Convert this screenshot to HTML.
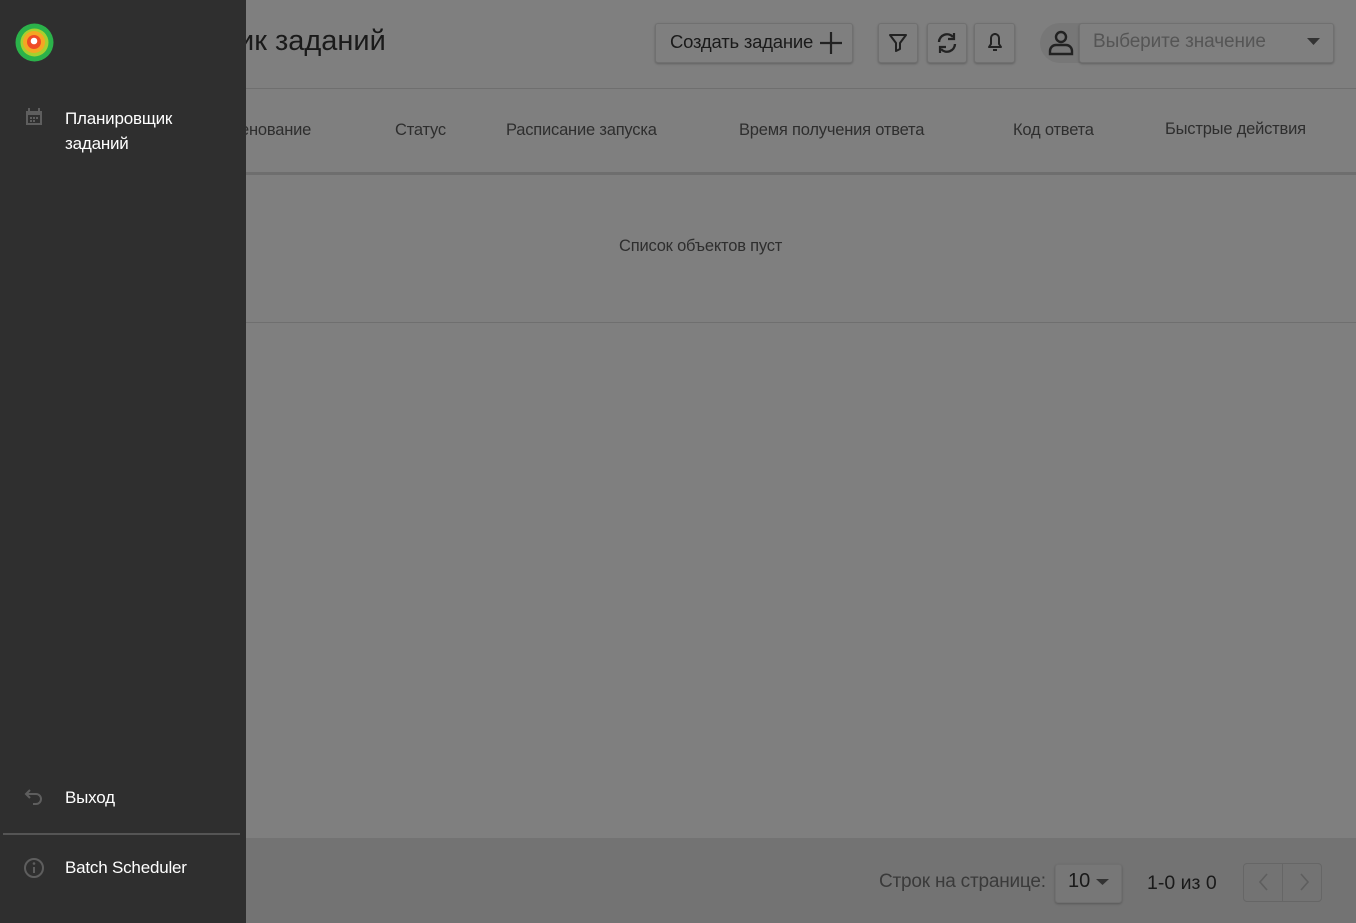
<!DOCTYPE html>
<html><head><meta charset="utf-8"><style>
*{margin:0;padding:0;box-sizing:border-box}
body{width:1356px;height:923px;overflow:hidden;background:#7f7f7f;font-family:"Liberation Sans Narrow","Liberation Sans",sans-serif;position:relative;color:#1e1e1e}
.a{position:absolute;white-space:nowrap}
.btn{position:absolute;border:1px solid #707070;border-radius:3px;background:#7f7f7f;box-shadow:0 1px 2px rgba(0,0,0,.25)}
.th{font-size:16.5px;color:#2e2e2e;top:121px;letter-spacing:-0.2px}
.side{position:absolute;left:0;top:0;width:246px;height:923px;background:#2f2f2f}
.side .t{color:#fff;font-size:17px;letter-spacing:-0.2px}
</style></head><body>
<div class="a" style="left:238px;top:25px;font-size:29px;color:#1a1a1a">ик заданий</div>
<div class="btn" style="left:655px;top:23px;width:198px;height:40px"></div>
<div class="a" style="left:670px;top:31px;font-size:18.5px;letter-spacing:-0.2px;color:#1a1a1a">Создать задание</div>
<svg class="a" style="left:818px;top:30px" width="26" height="26"><path d="M13 2v22M2 13h22" stroke="#222" stroke-width="2.2"/></svg>
<div class="btn" style="left:878px;top:23px;width:40px;height:40px"></div>
<svg class="a" style="left:887px;top:31px" width="22" height="22"><path d="M3 4h16l-6 8v6l-4 2v-8z" fill="none" stroke="#222" stroke-width="2" stroke-linejoin="round"/></svg>
<div class="btn" style="left:927px;top:23px;width:40px;height:40px"></div>
<svg class="a" style="left:935px;top:31px" width="24" height="24"><path d="M4 11a8 8 0 0 1 14-5M20 13a8 8 0 0 1-14 5" fill="none" stroke="#222" stroke-width="2.4"/><path d="M19 2v6h-6M5 22v-6h6" fill="none" stroke="#222" stroke-width="2.2"/></svg>
<div class="btn" style="left:974px;top:23px;width:41px;height:40px"></div>
<svg class="a" style="left:984px;top:30px" width="22" height="24"><path d="M5 17h12l-2-3v-6a4 4 0 0 0-8 0v6z" fill="none" stroke="#222" stroke-width="2" stroke-linejoin="round"/><path d="M9 20h4M11 3v1" stroke="#222" stroke-width="2"/></svg>
<div class="a" style="left:1040px;top:23px;width:50px;height:40px;border-radius:20px 0 0 20px;background:#777"></div>
<svg class="a" style="left:1046px;top:28px" width="30" height="30"><circle cx="15" cy="9" r="5" fill="none" stroke="#222" stroke-width="2.4"/><path d="M4 26v-3a6 6 0 0 1 6-6h10a6 6 0 0 1 6 6v3z" fill="none" stroke="#222" stroke-width="2.4"/></svg>
<div class="btn" style="left:1079px;top:23px;width:255px;height:40px"></div>
<div class="a" style="left:1093px;top:31px;font-size:19px;color:#555;letter-spacing:-0.1px">Выберите значение</div>
<svg class="a" style="left:1307px;top:38px" width="14" height="8"><path d="M0 0h13L6.5 7z" fill="#333"/></svg>
<div class="a" style="left:246px;top:88px;width:1110px;height:1px;background:#6f6f6f"></div>
<div class="a th" style="left:240px">енование</div>
<div class="a th" style="left:395px">Статус</div>
<div class="a th" style="left:506px">Расписание запуска</div>
<div class="a th" style="left:739px">Время получения ответа</div>
<div class="a th" style="left:1013px">Код ответа</div>
<div class="a th" style="left:1165px;top:120px">Быстрые действия</div>
<div class="a" style="left:246px;top:172px;width:1110px;height:3px;background:#6e6e6e"></div>
<div class="a" style="left:619px;top:237px;font-size:16.5px;letter-spacing:-0.2px;color:#2e2e2e">Список объектов пуст</div>
<div class="a" style="left:246px;top:322px;width:1110px;height:1px;background:#6f6f6f"></div>
<div class="a" style="left:246px;top:838px;width:1110px;height:85px;background:#737373"></div>
<div class="a" style="left:879px;top:871px;font-size:19px;color:#3a3a3a;letter-spacing:-0.2px">Строк на странице:</div>
<div class="btn" style="left:1055px;top:864px;width:67px;height:39px;background:#777"></div>
<div class="a" style="left:1068px;top:870px;font-size:20px;color:#1a1a1a">10</div>
<svg class="a" style="left:1096px;top:879px" width="14" height="8"><path d="M0 0h13L6.5 6z" fill="#333"/></svg>
<div class="a" style="left:1147px;top:872px;font-size:19.5px;color:#1a1a1a">1-0 из 0</div>
<div class="a" style="left:1243px;top:863px;width:79px;height:39px;border:1px solid #666;border-radius:4px"></div>
<div class="a" style="left:1282px;top:863px;width:1px;height:39px;background:#666"></div>
<svg class="a" style="left:1255px;top:872px" width="60" height="20"><path d="M12 2l-7 8 7 8M46 2l7 8-7 8" fill="none" stroke="#5e5e5e" stroke-width="1.6"/></svg>
<div class="side">
<svg class="a" style="left:15px;top:23px" width="39" height="39"><circle cx="19.5" cy="19.5" r="19" fill="#2bb24a"/><circle cx="19.5" cy="19.5" r="14" fill="#a7d02e"/><circle cx="19" cy="19" r="11" fill="#f5a623"/><circle cx="19" cy="19" r="7" fill="#ef4b24"/><circle cx="19" cy="18" r="3.3" fill="#fff"/></svg>
<svg class="a" style="left:24px;top:107px" width="20" height="20"><path d="M2 4h16v14H2z" fill="#5e5e5e"/><path d="M5 1v4M15 1v4" stroke="#5e5e5e" stroke-width="2"/><rect x="4" y="8" width="12" height="8" fill="#2f2f2f"/><rect x="6" y="10" width="2" height="2" fill="#5e5e5e"/><rect x="9" y="10" width="2" height="2" fill="#5e5e5e"/><rect x="12" y="10" width="2" height="2" fill="#5e5e5e"/><rect x="6" y="13" width="2" height="2" fill="#5e5e5e"/><rect x="9" y="13" width="2" height="2" fill="#5e5e5e"/></svg>
<div class="a t" style="left:65px;top:106px;line-height:25px">Планировщик<br>заданий</div>
<svg class="a" style="left:24px;top:787px" width="22" height="20"><path d="M6 3L2 7l4 4M2 7h10a5 5 0 0 1 0 10H9" fill="none" stroke="#5e5e5e" stroke-width="2"/></svg>
<div class="a t" style="left:65px;top:788px">Выход</div>
<div class="a" style="left:3px;top:833px;width:237px;height:2px;background:#555"></div>
<svg class="a" style="left:23px;top:857px" width="22" height="22"><circle cx="11" cy="11" r="9" fill="none" stroke="#5e5e5e" stroke-width="2"/><path d="M11 10v6" stroke="#5e5e5e" stroke-width="2"/><circle cx="11" cy="6.5" r="1.3" fill="#5e5e5e"/></svg>
<div class="a t" style="left:65px;top:858px">Batch Scheduler</div>
</div>
</body></html>
